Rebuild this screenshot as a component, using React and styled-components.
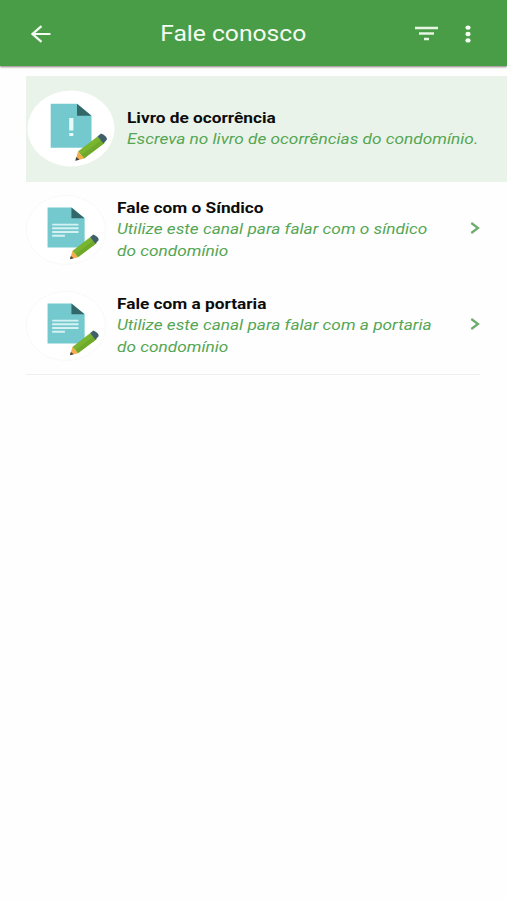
import styled, { createGlobalStyle } from "styled-components";

const GlobalStyle = createGlobalStyle`
    * {
        box-sizing: border-box;
    }
    body {
        margin: 0;
        background: #fefefe;
        font-family: Roboto, "Liberation Sans", sans-serif;
    }
`
const Page = styled.div`
    min-height: 900px;
    width: 507px;
    overflow: hidden;
`
const Header = styled.header`
    height: 66px;
    display: grid;
    grid-template-columns: 134px 1fr 134px;
    align-items: center;
    background: #4a9d47;
    box-shadow: 0 1px 2px rgba(60, 40, 40, 0.6);
`
const BackButton = styled.div`
    display: flex;
    padding: 1px 0 0 31px;
`
const Actions = styled.div`
    display: flex;
    align-items: center;
    gap: 27px;
    padding: 1px 0 0 42px;
`
const Stretch = styled.span`
    display: inline-block;
    white-space: nowrap;
    transform: scaleX(${({ $x }) => $x});
    transform-origin: ${({ $origin }) => $origin || "left"} center;
`
const Title = styled.h1`
    margin: 0;
    text-align: center;
    font-weight: 400;
    font-size: 22px;
    line-height: 26px;
    color: #f3fbf2;
    padding: 1px 40px 0 0;
`
const List = styled.ul`
    list-style: none;
    margin: 10px 0 0 26px;
    padding: 0;
`
const Item = styled.li`
    display: flex;
    height: ${({ $active }) => ($active ? "106px" : "96px")};
    padding: ${({ $active }) => ($active ? "14px 0 0 1px" : "13px 27px 0 0")};
    background: ${({ $active }) => ($active ? "#eaf3ea" : "transparent")};
`
const Divider = styled.li`
    height: 1px;
    margin-right: 27px;
    background: #efefef;
`
const Texts = styled.div`
    flex: 1;
    min-width: 0;
    padding: ${({ $active }) => ($active ? "18px 0 0 12px" : "3px 0 0 11px")};
`
const Name = styled.h2`
    margin: 0;
    font-weight: 700;
    font-size: 15px;
    line-height: 21px;
    color: #0c0c0c;
`
const Description = styled.p`
    margin: 0;
    font-style: italic;
    font-size: 15px;
    line-height: 21.5px;
    color: #55a653;
`
const Chevron = styled.svg`
    flex: none;
    width: 10px;
    height: 14px;
    margin-top: 26px;
`

const NoteIcon = ({ width, height, alert }) => (
    <svg width={width} height={height} viewBox="0 0 88 77" preserveAspectRatio="none">
        <ellipse cx="44" cy="38.5" rx="43.5" ry="38" fill="#fff" stroke={alert ? "none" : "#f7f7f7"} />
        <path d="M23.7 13.7H50L64.5 25.7V57.7H23.7Z" fill="#74c9ce" />
        <path d="M50 13.7L64.5 25.7H50Z" fill="#33686a" />
        {alert ? (
            <path d="M42.2 28h4.2v12.5h-4.2ZM42.3 43h4v3h-4Z" fill="#e6fafa" />
        ) : (
            <path d="M28.8 32.5h29M28.8 36.6h29M28.8 40.7h29M28.8 44.8h14" stroke="#d5f2f3" strokeWidth="2" />
        )}
        <path d="M51 61.5L70.5 46.5L77.5 53L57 68.5Z" fill="#7ab52f" />
        <path d="M54.5 65L74 50L77.5 53L57 68.5Z" fill="#6fa92c" />
        <path d="M70.5 46.5L74 43.5Q80 46 80 49.5L76.5 53.5Z" fill="#3f5f69" />
        <path d="M51 61.5L57.5 68.5L48.5 70.5Z" fill="#f3ad4d" />
        <path d="M49.3 67L52.5 69.7L48.3 70.8Z" fill="#3b4040" />
    </svg>
)

const items = [
    {
        name: "Livro de ocorrência",
        lines: ["Escreva no livro de ocorrências do condomínio."],
        active: true,
    },
    {
        name: "Fale com o Síndico",
        lines: ["Utilize este canal para falar com o síndico", "do condomínio"],
    },
    {
        name: "Fale com a portaria",
        lines: ["Utilize este canal para falar com a portaria", "do condomínio"],
    },
]

const ContactItem = ({ item }) => (
    <Item $active={item.active}>
        <NoteIcon width={item.active ? 88 : 80} height={item.active ? 77 : 70} alert={item.active} />
        <Texts $active={item.active}>
            <Name><Stretch $x={1.15}>{item.name}</Stretch></Name>
            {item.lines.map((line) => (
                <Description key={line}><Stretch $x={1.15}>{line}</Stretch></Description>
            ))}
        </Texts>
        {!item.active && (
            <Chevron viewBox="0 0 10 14">
                <path d="M1.3 2L8 7L1.3 12" fill="none" stroke="#6cab6b" strokeWidth="2.2" />
            </Chevron>
        )}
    </Item>
)

const App = () => {
    return (
        <>
            <GlobalStyle />
            <Page>
                <Header>
                    <BackButton>
                        <svg width="20" height="18" viewBox="0 0 20 18">
                            <path d="M19.5 9H2M10.5 1.2L1.5 9L10.5 16.8" fill="none" stroke="#f3fbf2" strokeWidth="2.2" />
                        </svg>
                    </BackButton>
                    <Title><Stretch $x={1.12} $origin="center">Fale conosco</Stretch></Title>
                    <Actions>
                        <svg width="23" height="15" viewBox="0 0 23 15">
                            <path d="M0 2h23M4 7.5h15M9 13h5" stroke="#e6f5e4" strokeWidth="2.4" />
                        </svg>
                        <svg width="6" height="18" viewBox="0 0 6 18">
                            <ellipse cx="3" cy="2.6" rx="2.6" ry="2.2" fill="#f3fbf2" />
                            <ellipse cx="3" cy="9" rx="2.6" ry="2.2" fill="#f3fbf2" />
                            <ellipse cx="3" cy="15.4" rx="2.6" ry="2.2" fill="#f3fbf2" />
                        </svg>
                    </Actions>
                </Header>
                <List>
                    {items.map((item) => (
                        <ContactItem key={item.name} item={item} />
                    ))}
                    <Divider />
                </List>
            </Page>
        </>
    )
}

export default App;
